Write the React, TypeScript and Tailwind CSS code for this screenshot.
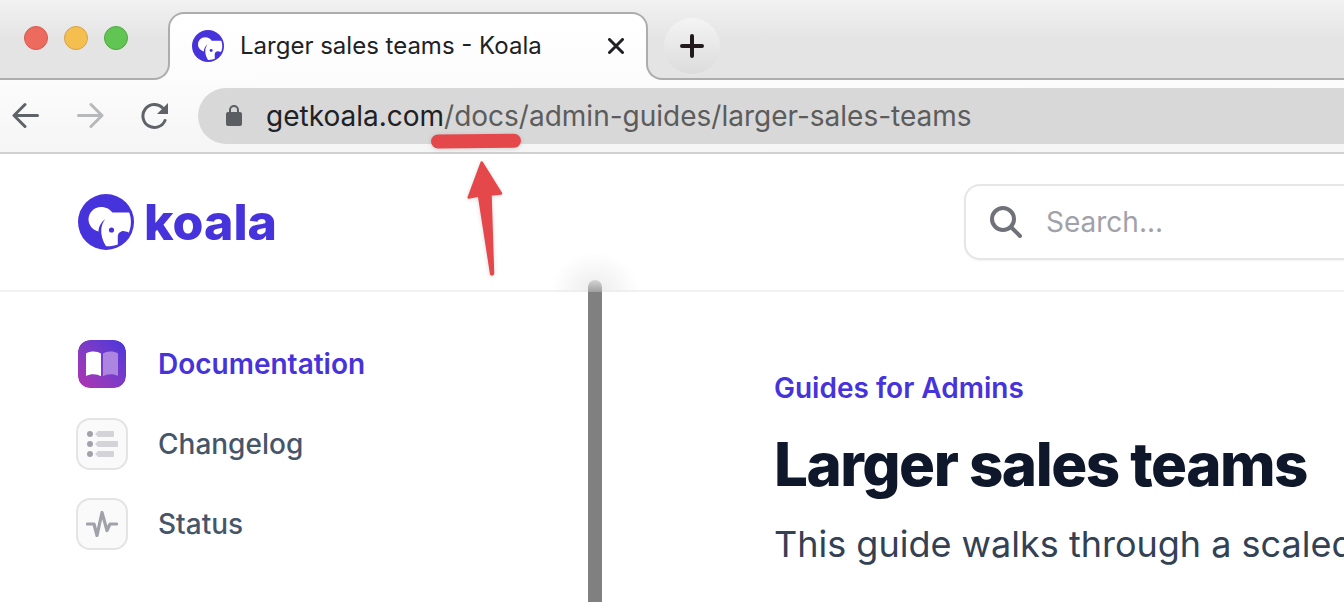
import React from "react";

function KoalaMark({ className }: { className: string }) {
  return (
    <svg viewBox="0 0 56 56" className={className} aria-hidden="true">
      <circle cx="28" cy="28" r="28" fill="#4733db" />
      <path
        fill="#fff"
        d="M20.500 37.500C14.500 35.800 10.500 31 10.500 25.500C10.500 18.400 16.200 12.900 23 12.900C28.200 12.900 32.300 15.300 34.400 18.600H51.200C52.300 21.500 52.900 24.500 52.900 28C52.900 31.500 52.200 35.500 50.700 38.700C50 37.400 47.500 38.300 46 37C43 36.700 39.800 39 39.800 42.500V50.500C36.500 51.700 32 52.600 28 52.300C24.500 46.500 22.700 40.500 23.300 35C23.700 31 25.200 28 27.200 25.300C23.400 28 20.700 32.500 20.500 37.500Z"
      />
      <circle cx="33.500" cy="36" r="2.600" fill="#4733db" />
    </svg>
  );
}

function BackIcon({ className }: { className: string }) {
  return (
    <svg viewBox="0 0 28 28" className={className} fill="none" stroke="currentColor" strokeWidth="3" strokeLinecap="round" strokeLinejoin="round" aria-hidden="true">
      <path d="M25.500 13.500H3M13 2.500L2 13.500L13 24.500" />
    </svg>
  );
}

function ForwardIcon({ className }: { className: string }) {
  return (
    <svg viewBox="0 0 28 28" className={className} fill="none" stroke="currentColor" strokeWidth="3" strokeLinecap="round" strokeLinejoin="round" aria-hidden="true">
      <path d="M2.500 13.500H25M15 2.500L26 13.500L15 24.500" />
    </svg>
  );
}

function ReloadIcon() {
  return (
    <svg viewBox="0 0 28 28" className="size-7" fill="none" aria-hidden="true">
      <path d="M25 18.500A11.500 11.500 0 1 1 22.500 5.800" stroke="#5f6368" strokeWidth="3" strokeLinecap="round" />
      <path d="M28 1V12H17Z" fill="#5f6368" />
    </svg>
  );
}

function BookIcon() {
  return (
    <svg viewBox="0 0 32 26" className="h-[26px] w-8" aria-hidden="true">
      <path d="M15 2.600C11.500-.2 4.500-.4 0 2.400V25C4.500 22.500 11 22.600 15 25.300Z" fill="#fff" />
      <path d="M17 2.600C20.500-.2 27.500-.4 32 2.400V25C27.500 22.500 21 22.600 17 25.300Z" fill="#ac85e0" />
    </svg>
  );
}

function ListIcon() {
  const rows = [
    { y: 3, end: 27 },
    { y: 13, end: 31 },
    { y: 23, end: 27 },
  ];
  return (
    <svg viewBox="0 0 32 26" className="h-[26px] w-8" aria-hidden="true">
      {rows.map(({ y, end }) => (
        <g key={y}>
          <circle cx="4" cy={y} r="3" fill="#a1a1aa" />
          <path d={`M9 ${y}L12 ${y - 3}H${end}Q${end + 1} ${y - 3} ${end + 1} ${y - 2}V${y + 2}Q${end + 1} ${y + 3} ${end} ${y + 3}H12Z`} fill="#d4d4d8" />
        </g>
      ))}
    </svg>
  );
}

function PulseIcon() {
  return (
    <svg viewBox="0 0 32 26" className="h-[26px] w-8" fill="none" stroke="#a1a1aa" strokeWidth="3.200" strokeLinecap="round" strokeLinejoin="round" aria-hidden="true">
      <path d="M1.500 13H8L11 24.500L16 1.500L21 19.500L24 13H30.500" />
    </svg>
  );
}

function TabStrip() {
  return (
    <div className="flex h-20 bg-linear-to-b from-[#f2f2f2] to-[#e4e4e4] to-50%">
      <div className="flex w-[168px] shrink-0 gap-4 border-b-2 border-[#adadad] pt-[26px] pl-6">
        <button aria-label="Close window" className="size-6 rounded-full border border-[#d65a50] bg-[#ed6a5e]" />
        <button aria-label="Minimize window" className="size-6 rounded-full border border-[#d8a243] bg-[#f5bf4f]" />
        <button aria-label="Zoom window" className="size-6 rounded-full border border-[#4fa73f] bg-[#61c554]" />
      </div>
      <div className="relative mt-3 flex w-[480px] shrink-0 items-center rounded-t-2xl border-2 border-b-0 border-[#adadad] bg-linear-to-b from-white to-[#fcfcfc] px-[22px] pb-[2px]">
        <span className="absolute bottom-0 -left-4 size-4 overflow-hidden bg-[#fcfcfc]">
          <span className="block size-full rounded-br-2xl border-r-2 border-b-2 border-[#adadad] bg-[#e4e4e4]" />
        </span>
        <span className="absolute -right-4 bottom-0 size-4 overflow-hidden bg-[#fcfcfc]">
          <span className="block size-full rounded-bl-2xl border-b-2 border-l-2 border-[#adadad] bg-[#e4e4e4]" />
        </span>
        <KoalaMark className="size-8" />
        <span className="ml-4 flex-1 text-2xl whitespace-nowrap text-[#202124]">Larger sales teams - Koala</span>
        <button aria-label="Close tab">
          <svg viewBox="0 0 16 16" className="size-4" stroke="#202124" strokeWidth="3" strokeLinecap="round" aria-hidden="true">
            <path d="M1.500 1.500L14.500 14.500M14.500 1.500L1.500 14.500" />
          </svg>
        </button>
      </div>
      <div className="flex flex-1 border-b-2 border-[#adadad] pt-[18px] pl-4">
        <button aria-label="New tab" className="flex size-14 items-center justify-center rounded-full bg-linear-to-b from-[#f4f4f4] to-[#dcdcdc]">
          <svg viewBox="0 0 24 24" className="size-6" stroke="#231a1e" strokeWidth="4" strokeLinecap="round" aria-hidden="true">
            <path d="M12 2V22M2 12H22" />
          </svg>
        </button>
      </div>
    </div>
  );
}

function AddressBar() {
  return (
    <div className="flex h-[74px] items-center border-b-2 border-[#d0d0d0] bg-linear-to-b from-[#fcfcfc] to-[#f5f5f5] pl-3">
      <button aria-label="Back" className="text-[#5f6368]">
        <BackIcon className="size-7" />
      </button>
      <button aria-label="Forward" className="ml-9 text-[#b6b8ba]">
        <ForwardIcon className="size-7" />
      </button>
      <button aria-label="Reload" className="ml-9">
        <ReloadIcon />
      </button>
      <div className="relative ml-[30px] flex h-14 flex-1 items-center rounded-l-full bg-[#d8d8d8] pl-7">
        <svg viewBox="0 0 16 22" className="h-[22px] w-4" fill="none" aria-hidden="true">
          <path d="M4 9V5A4 4 0 0 1 12 5V9" stroke="#5a5e63" strokeWidth="2" />
          <rect y="7" width="16" height="14" rx="2" fill="#5a5e63" />
        </svg>
        <a href="#docs" className="ml-6 text-[28px] whitespace-nowrap text-[#5c5c5c]">
          <span className="text-[#202124]">getkoala.com</span>/docs/admin-guides/larger-sales-teams
        </a>
        <svg viewBox="0 0 100 150" className="pointer-events-none absolute top-[42px] left-[228px] z-10 h-[150px] w-[100px] drop-shadow-sm" aria-hidden="true">
          <path d="M12 11.500L88 10.800" stroke="#e5484b" strokeWidth="14" strokeLinecap="round" />
          <path d="M55.700 32.500L75 63.500L64.500 64.500L67 143.500Q66.500 145 65.200 144L53 65.500L42.700 67.500Z" fill="#e5484b" stroke="#e5484b" strokeWidth="2.500" strokeLinejoin="round" />
        </svg>
      </div>
    </div>
  );
}

function SiteHeader() {
  return (
    <header className="relative flex h-[138px] items-center justify-between border-b-2 border-[#f1f1f2] pl-[78px]">
      <a href="#home" className="flex items-center gap-[10px] text-[#4733db]">
        <KoalaMark className="size-14" />
        <span className="text-[50px] leading-14 font-extrabold">koala</span>
      </a>
      <label className="flex h-[76px] w-[380px] items-center rounded-l-2xl border-2 border-r-0 border-[#e6e6e8] bg-white pl-6 shadow-xs">
        <svg viewBox="0 0 32 32" className="size-8" fill="none" stroke="#71717a" strokeWidth="4" strokeLinecap="round" aria-hidden="true">
          <circle cx="13" cy="13" r="11" />
          <path d="M21.500 21.500L30 30" />
        </svg>
        <input type="search" aria-label="Search" placeholder="Search..." className="ml-6 min-w-0 flex-1 text-[28px] outline-none placeholder:text-[#a1a1aa]" />
      </label>
      <span className="pointer-events-none absolute -bottom-[2px] left-[550px] flex h-10 w-[90px] items-end justify-center bg-radial-[at_50%_100%] from-[#ececec] to-transparent to-70%">
        <span className="h-3 w-[14px] rounded-t-full bg-linear-to-b from-[#d5d5d5] to-[#a0a0a0]" />
      </span>
    </header>
  );
}

const links = [
  { label: "Documentation", icon: <BookIcon />, active: true },
  { label: "Changelog", icon: <ListIcon />, active: false },
  { label: "Status", icon: <PulseIcon />, active: false },
];

function Sidebar() {
  return (
    <nav className="flex w-[588px] shrink-0 flex-col gap-7 pt-[46px] pl-[76px]">
      {links.map(({ label, icon, active }) => (
        <a key={label} href={"#" + label.toLowerCase()} className="flex items-center gap-[30px]">
          <span
            className={
              active
                ? "flex size-[52px] items-center justify-center rounded-[14px] border-2 border-white bg-linear-to-tr from-[#b030b0] to-[#4733db] bg-clip-padding"
                : "flex size-[52px] items-center justify-center rounded-[14px] border-2 border-[#e4e4e5] bg-[#fafafa]"
            }
          >
            {icon}
          </span>
          <span className={active ? "text-[28px] font-semibold text-[#4733db]" : "text-[28px] font-medium text-[#475569]"}>{label}</span>
        </a>
      ))}
    </nav>
  );
}

export default function App() {
  return (
    <div className="flex min-h-screen flex-col overflow-x-hidden bg-white font-['Inter',sans-serif]">
      <div className="shrink-0">
        <TabStrip />
        <AddressBar />
        <SiteHeader />
      </div>
      <div className="flex flex-1">
        <Sidebar />
        <div className="w-[14px] shrink-0 bg-[#808080]" />
        <main className="flex-1 overflow-hidden pt-[76px] pl-[172px] whitespace-nowrap">
          <p className="text-[28px] leading-10 font-semibold text-[#4733db]">Guides for Admins</p>
          <h1 className="mt-4 text-[60px] leading-[80px] font-extrabold tracking-tight text-[#0f172a]">Larger sales teams</h1>
          <p className="mt-4 text-4xl leading-[48px] text-[#334155]">This guide walks through a scaled</p>
        </main>
      </div>
    </div>
  );
}
